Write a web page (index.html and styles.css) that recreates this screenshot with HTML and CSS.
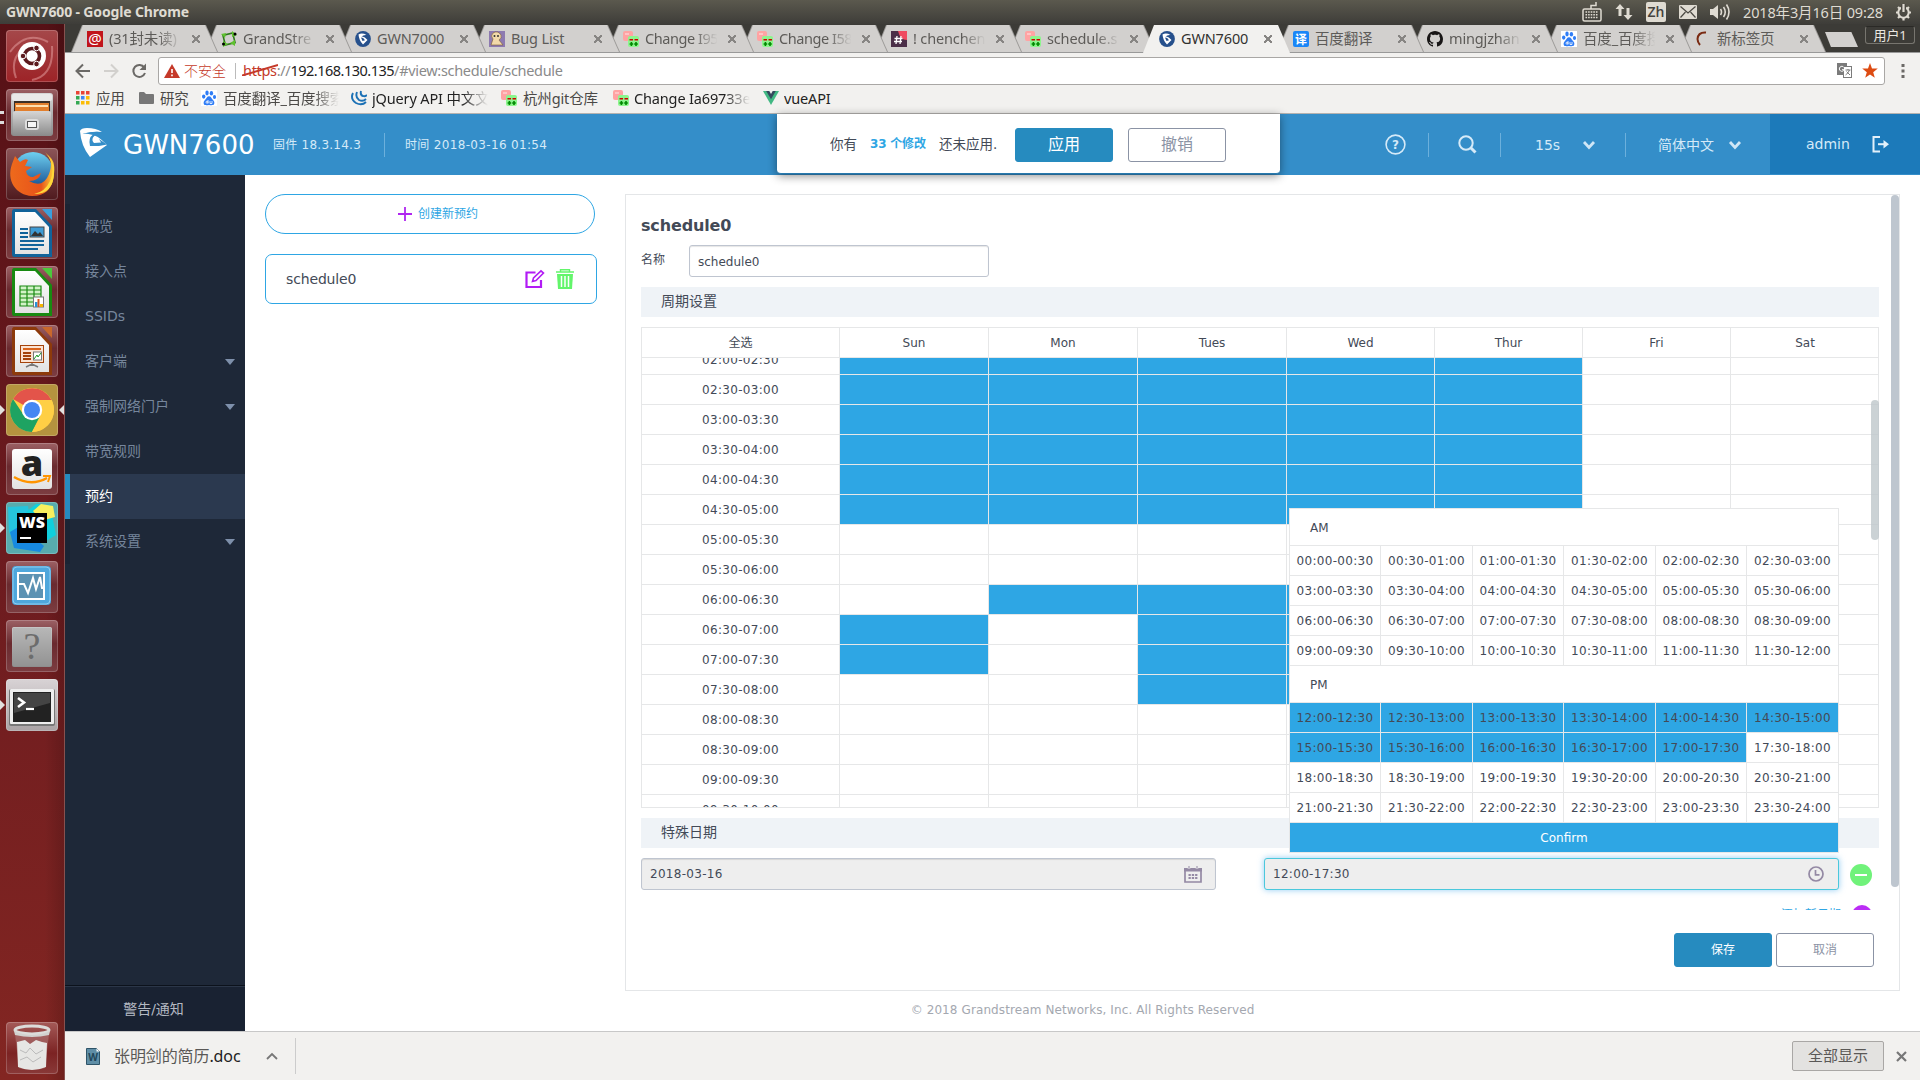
FILE: index.html
```html
<!DOCTYPE html>
<html lang="zh-CN">
<head>
<meta charset="utf-8">
<title>GWN7600</title>
<link rel="stylesheet" href="styles.css">
</head>
<body>
<svg width="0" height="0" class="defs">
  <defs>
    <linearGradient id="paper" x1="0" y1="0" x2="0" y2="1"><stop offset="0" stop-color="#fff"/><stop offset="1" stop-color="#e2e2e2"/></linearGradient>
    <linearGradient id="metal" x1="0" y1="0" x2="0" y2="1"><stop offset="0" stop-color="#d6d6d6"/><stop offset="1" stop-color="#8a8a8a"/></linearGradient>
    <linearGradient id="globe" x1="0" y1="0" x2="0" y2="1"><stop offset="0" stop-color="#6fd0f0"/><stop offset="1" stop-color="#0b3f86"/></linearGradient>
    <linearGradient id="fox" x1="0" y1="0" x2="1" y2="0"><stop offset="0" stop-color="#ee6a1c"/><stop offset=".7" stop-color="#e8531a"/><stop offset="1" stop-color="#ffd83a"/></linearGradient>
    <symbol id="gerrit" viewBox="0 0 16 16"><rect x="0" y="0" width="10" height="10" rx="2" fill="#ffa3a3"/><rect x="2" y="2" width="4" height="2" fill="#ffc4c4"/><rect x="5" y="5" width="11" height="11" rx="2" fill="#8df58d"/><path d="M6.500 8h3.500v1.600h-3.500zM11.500 8h3.500v1.600h-3.500z" fill="#c00"/><path d="M7.600 11h1.600v1.200h1v1.600h-1v1.200h-1.600v-1.200h-1v-1.600h1zM12.200 11h1.600v1.200h1v1.600h-1v1.200h-1.600v-1.200h-1v-1.600h1z" fill="#080"/></symbol>
    <symbol id="gs" viewBox="0 0 16 16"><ellipse cx="8" cy="8" rx="7.900" ry="8" fill="#26508c"/><path d="M3.500 3.500Q7 1.500 11.500 4 8 3.800 6.500 5.500q3-.6 6 3.500L8 13.500Q4 9.500 3.500 3.500z" fill="#fff"/><path d="M6 6.500l1.500 3.500 2.500-.8L8.200 7z" fill="#26508c"/></symbol>
    <symbol id="baidu" viewBox="0 0 16 16"><rect width="16" height="16" fill="#fff"/><g fill="#2f7df6"><ellipse cx="6" cy="3" rx="1.700" ry="2.400"/><ellipse cx="10.400" cy="3.200" rx="1.700" ry="2.300"/><ellipse cx="2.700" cy="6.600" rx="1.700" ry="2.100"/><ellipse cx="13.500" cy="7" rx="1.600" ry="2.100"/><path d="M8 6.200c2 0 2.400 2 4 3.700 2 2 1.700 4.600-.3 5.200-1.500.4-2.500-.2-3.700-.2s-2.200.6-3.700.2c-2-.6-2.300-3.200-.3-5.200 1.600-1.700 2-3.700 4-3.700z"/></g><path d="M5 12.200a1 1 0 1 0 2 0a1 1 0 1 0-2 0M7 10v3.500M9 11v2.500h2v-2.500" fill="none" stroke="#fff" stroke-width=".8"/></symbol>
    <symbol id="chev" viewBox="0 0 14 10"><path d="M2 2l5 5.400 5-5.400" fill="none" stroke="#cfe6f6" stroke-width="2.800"/></symbol>
  </defs>
</svg>

<header class="panel">
  <span class="panel-title">GWN7600 - Google Chrome</span>
  <div class="indicators">
    <svg width="20" height="22" viewBox="0 0 20 22"><path d="M9 8V4.500h5V1" fill="none" stroke="#dfdbd2" stroke-width="1.500"/><rect x="1" y="8" width="18" height="12" rx="1.500" fill="none" stroke="#dfdbd2" stroke-width="1.500"/><path d="M3.500 11h13M3.500 13.700h13M3.500 16.500h13" stroke="#dfdbd2" stroke-width="1.600" stroke-dasharray="1.600 1"/></svg>
    <svg width="18" height="18" viewBox="0 0 18 18"><path d="M5 1l4.500 5H6.500v7h-3V6H.5zM13 17l-4.500-5h3V5h3v7h3z" fill="#dfdbd2"/></svg>
    <span class="ime">Zh</span>
    <svg width="18" height="14" viewBox="0 0 18 14"><rect width="18" height="14" rx="1" fill="#dfdbd2"/><path d="M1.500 1.500L9 8l7.500-6.500M1.500 12.500l5-5.500M16.500 12.500l-5-5.500" fill="none" stroke="#4a4842" stroke-width="1.200"/></svg>
    <svg width="21" height="18" viewBox="0 0 21 18"><path d="M0 6h3l5-4v14l-5-4H0z" fill="#dfdbd2"/><path d="M10.500 6q2 3 0 6M13.500 4q3.500 5 0 10M16.500 1.500q5 7.500 0 15" fill="none" stroke="#dfdbd2" stroke-width="1.600"/></svg>
    <span class="clock">2018年3月16日 09:28</span>
    <svg width="17" height="18" viewBox="0 0 17 18"><circle cx="8.500" cy="9.500" r="5.200" fill="none" stroke="#dfdbd2" stroke-width="2"/><path d="M1 9.500h2M14 9.500h2M3 4l1.800 1.800M14 4l-1.800 1.800M3 15l1.800-1.800M14 15l-1.800-1.800M8.500 15v2.500" stroke="#dfdbd2" stroke-width="2.200"/><path d="M8.500 1v8" stroke="#4a4842" stroke-width="5"/><path d="M8.500 1v8" stroke="#dfdbd2" stroke-width="2.200"/></svg>
  </div>
</header>

<div class="desktop">
<aside class="launcher">
  <div class="tile ubuntu"><svg viewBox="0 0 52 52"><path d="M4 22Q20 0 42 12M10 48Q2 26 24 14M26 50Q48 46 46 16" stroke="#e8a5a5" stroke-width="2" fill="none" opacity=".5"/><circle cx="26" cy="26" r="14" fill="#fff"/><circle cx="26" cy="26" r="7.500" fill="none" stroke="#5c1a1e" stroke-width="3.600"/><g fill="#5c1a1e" stroke="#fff" stroke-width="1"><circle cx="17" cy="26" r="2.800"/><circle cx="30.500" cy="18" r="2.800"/><circle cx="30.500" cy="34" r="2.800"/></g></svg></div>
  <div class="tile run2"><svg viewBox="0 0 52 52"><rect x="5" y="4" width="42" height="43" rx="3" fill="url(#metal)"/><rect x="6" y="5" width="40" height="7" rx="2" fill="#e9e9e9"/><rect x="8" y="12" width="36" height="14" fill="#3b3028"/><rect x="9" y="14" width="34" height="12" fill="#e27f2d"/><path d="M10 17h32" stroke="#ffe0b0" stroke-width="2"/><rect x="7" y="22" width="38" height="25" rx="2" fill="url(#metal)"/><rect x="19" y="30" width="14" height="11" rx="3" fill="#ddd"/><rect x="21.500" y="32.500" width="9" height="6" fill="#f5f5f5" stroke="#555"/></svg></div>
  <div class="tile dark"><svg viewBox="0 0 52 52"><circle cx="27" cy="24" r="20" fill="url(#globe)"/><path d="M6 16l3-8 5 6q5-4 8-2l-3 6 7 1-6 4q1 6 7 6l8-4q-2 8-12 8 14 8 20-7 5-14-3-20 10 5 8 20-2 22-22 22C10 47 0 33 6 16z" fill="url(#fox)"/><path d="M39 4q12 14 5 29-5 11-16 13 20 0 20-22 0-12-9-20z" fill="#ffd83a"/></svg></div>
  <div class="tile"><svg viewBox="0 0 52 52"><path d="M8 2h22l16 17v31H8q-2 0-2-3V5q0-3 2-3z" fill="#11639a"/><path d="M9 5h20l14 15v27H9z" fill="url(#paper)"/><path d="M36 2h10v11z" fill="#3aa0dd"/><path d="M14 22h8M14 26h8M14 30h8M14 34h24M14 38h24M14 42h18" stroke="#11639a" stroke-width="2"/><rect x="24" y="20" width="14" height="10" fill="#3e9bd4" stroke="#444"/><path d="M25 29l4-5 3 3 2-2 3 4z" fill="#333"/></svg></div>
  <div class="tile"><svg viewBox="0 0 52 52"><path d="M8 2h22l16 17v31H8q-2 0-2-3V5q0-3 2-3z" fill="#188a11"/><path d="M9 5h20l14 15v27H9z" fill="url(#paper)"/><path d="M36 2h10v11z" fill="#4cc83c"/><rect x="14" y="20" width="21" height="20" fill="#d2f3c8"/><path d="M14 20h21v20H14zM14 24h21M14 28h21M14 32h21M14 36h21M21 20v20M28 20v20" fill="none" stroke="#188a11" stroke-width="1.200"/><rect x="27.500" y="31" width="10" height="10" fill="#fff" stroke="#777"/><path d="M29 41v-5h2.500v5z" fill="#2a92d8"/><path d="M31.500 41v-8h2v8z" fill="#d9541c"/><path d="M34 41v-3h3v3z" fill="#f3b400"/></svg></div>
  <div class="tile"><svg viewBox="0 0 52 52"><path d="M8 2h22l16 17v31H8q-2 0-2-3V5q0-3 2-3z" fill="#8d3a0b"/><path d="M9 5h20l14 15v27H9z" fill="url(#paper)"/><path d="M36 2h10v11z" fill="#c9682c"/><rect x="14.500" y="20.500" width="23" height="17" fill="#fbe3d2" stroke="#a4430b"/><path d="M17 24h18" stroke="#d9641c" stroke-width="2"/><path d="M17 28h8M17 31h8M17 34h8" stroke="#a4430b" stroke-width="1.800"/><rect x="27.500" y="27" width="8" height="8" fill="#fff" stroke="#777"/><path d="M28 34l3-4 1 2 3-4" stroke="#1a9d22" fill="none"/><path d="M26 38v3M20 42l6-3 6 3" stroke="#777" stroke-width="1.500" fill="none"/></svg></div>
  <div class="tile gold run act"><svg viewBox="0 0 52 52"><circle cx="26" cy="26" r="22" fill="#ffcf45"/><path d="M26 26L7 15A22 22 0 0 1 45.500 16H26z" fill="#e3544a"/><path d="M26 26l-9 4L7 15A22 22 0 0 0 26 48l8-16z" fill="#1ea362"/><path d="M26 48l9.500-17 1-15h9A22 22 0 0 1 26 48z" fill="#ffcf45"/><circle cx="26" cy="26" r="10.200" fill="#fff"/><circle cx="26" cy="26" r="8" fill="#4587f3"/></svg></div>
  <div class="tile"><svg viewBox="0 0 52 52"><rect x="6" y="6" width="40" height="40" rx="3" fill="url(#paper)"/><text x="26" y="33" text-anchor="middle" font-family="Open Sans" font-weight="800" font-size="36" fill="#222">a</text><path d="M8 34q17 10 33 1" fill="none" stroke="#ff9400" stroke-width="2.400"/><path d="M37 33h7l-2 6" fill="none" stroke="#ff9400" stroke-width="2"/></svg></div>
  <div class="tile teal run"><svg viewBox="0 0 52 52"><path d="M2 5l20-1 6 40-16 3L3 30z" fill="#25c4dd"/><path d="M4 30l10-6 24 20-4 6L8 46z" fill="#1789e0"/><path d="M20 10l10-8 14 1 6 30-10 6z" fill="#10cfdd"/><path d="M27 9l8-7 12 2 2 11-14 4z" fill="#f8ef5d"/><rect x="11" y="11" width="30" height="30" fill="#000"/><text x="26" y="26" text-anchor="middle" font-family="Open Sans" font-weight="800" font-size="16" fill="#fff">WS</text><path d="M14 36h11" stroke="#fff" stroke-width="2"/></svg></div>
  <div class="tile"><svg viewBox="0 0 52 52"><rect x="6" y="5" width="39" height="39" rx="4" fill="#4fa7dc"/><rect x="7" y="6" width="37" height="37" rx="4" fill="none" stroke="#8fcdf0"/><rect x="12" y="12" width="26" height="26" fill="#5c92b3" stroke="#fff" stroke-width="2"/><path d="M13 23h5l4 9 5-15 3 11 4-12 2 11h2" fill="none" stroke="#fff" stroke-width="2"/></svg></div>
  <div class="tile"><svg viewBox="0 0 52 52"><rect x="6" y="7" width="40" height="40" rx="2" fill="url(#metal)"/><rect x="6.500" y="7.500" width="39" height="39" rx="2" fill="#999" opacity=".5"/><text x="26" y="39" text-anchor="middle" font-family="Liberation Serif" font-size="38" fill="#6c6c6c">?</text></svg></div>
  <div class="tile silver run"><svg viewBox="0 0 52 52"><rect x="3" y="10" width="46" height="37" rx="2" fill="#777"/><rect x="4" y="10" width="44" height="35" rx="1" fill="#eee"/><rect x="7" y="13" width="38" height="30" fill="#222"/><path d="M8 14h36v10L8 34z" fill="#444"/><path d="M12 19l6 4.500-6 4.500" fill="none" stroke="#fff" stroke-width="2.600"/><path d="M20 30h8" stroke="#fff" stroke-width="2.200"/></svg></div>
  <div class="tile trash"><svg viewBox="0 0 52 52"><path d="M9 12l4 34q13 4 26 0l4-34z" fill="#b98a8a" opacity=".45"/><path d="M11 20l8-2 5 4 6-4 6 2 5 1-1 24q-14 6-28 0z" fill="#e6e6e4"/><path d="M14 28l6 3 4-5 6 6 7-4M14 38l7-3 6 5 8-5" stroke="#bbb" fill="none"/><ellipse cx="26" cy="8" rx="17" ry="4" fill="none" stroke="#dcdcda" stroke-width="3"/><path d="M8 9q18 8 36 0l-1 4q-17 4-34 0z" fill="#d2d2d0"/></svg></div>
</aside>

<div class="browser">
  <div class="tabstrip">
    <div class="tab"><svg class="fav" viewBox="0 0 16 16"><rect width="16" height="16" fill="#c1141b"/><text x="8" y="13" text-anchor="middle" font-family="Noto Sans" font-size="15" fill="#fff">@</text></svg><span class="cap">(31封未读)</span><i class="x"></i></div>
    <div class="tab"><svg class="fav" viewBox="0 0 16 16"><rect x="3" y="3" width="10" height="10" fill="none" stroke="#2f7a1d" stroke-width="1.600" transform="rotate(-14 8 8)"/><path d="M0 3l5-1-1 5zM11 0l5 4-5 2zM14 9l0 6-5-3zM2 10l5 3-5 3z" fill="#5fc12f"/><circle cx="14" cy="3" r="1.500"/><circle cx="2.500" cy="13" r="1.500"/></svg><span class="cap">GrandStre</span><i class="x"></i></div>
    <div class="tab"><svg class="fav"><use href="#gs"/></svg><span class="cap">GWN7000</span><i class="x"></i></div>
    <div class="tab"><svg class="fav" viewBox="0 0 16 16"><rect width="16" height="16" fill="#8d7ab0"/><path d="M2 14L4 8Q1 5 4 2q5-3 8 2 1 3-2 5l4 5z" fill="#f2d9a9" stroke="#7a5b33" stroke-width=".6"/><circle cx="5.500" cy="5" r="1" fill="#333"/><circle cx="9" cy="5" r="1" fill="#333"/></svg><span class="cap">Bug List</span><i class="x"></i></div>
    <div class="tab"><svg class="fav"><use href="#gerrit"/></svg><span class="cap tight">Change I95</span><i class="x"></i></div>
    <div class="tab"><svg class="fav"><use href="#gerrit"/></svg><span class="cap tight">Change I58</span><i class="x"></i></div>
    <div class="tab"><svg class="fav" viewBox="0 0 16 16"><rect width="16" height="16" fill="#4b2f48"/><path d="M7 0h9v9q-7 0-9-9z" fill="#ef4b61"/><path d="M6 5L5 13M10 5L9 13M3.500 7.500h8M3 10.500h8" stroke="#fff" stroke-width="1.300"/></svg><span class="cap">! chenchen</span><i class="x"></i></div>
    <div class="tab"><svg class="fav"><use href="#gerrit"/></svg><span class="cap">schedule.s</span><i class="x"></i></div>
    <div class="tab current"><svg class="fav"><use href="#gs"/></svg><span class="cap">GWN7600</span><i class="x"></i></div>
    <div class="tab"><svg class="fav" viewBox="0 0 16 16"><rect width="16" height="16" rx="2" fill="#1a86f7"/><text x="8" y="12.500" text-anchor="middle" font-family="Noto Sans CJK SC" font-weight="700" font-size="12" fill="#fff">译</text></svg><span class="cap">百度翻译</span><i class="x"></i></div>
    <div class="tab"><svg class="fav" viewBox="0 0 16 16"><path fill="#181616" d="M8 0C3.580 0 0 3.580 0 8c0 3.540 2.290 6.530 5.470 7.590.4.070.55-.17.55-.38 0-.19-.01-.82-.01-1.490-2.010.37-2.530-.49-2.690-.94-.09-.23-.48-.94-.82-1.130-.28-.15-.68-.52-.01-.53.63-.01 1.080.58 1.230.82.72 1.210 1.870.87 2.330.66.070-.52.280-.87.510-1.070-1.780-.2-3.640-.89-3.640-3.950 0-.87.310-1.590.82-2.150-.08-.2-.36-1.020.08-2.120 0 0 .67-.21 2.200.82.640-.18 1.320-.27 2-.27s1.360.09 2 .27c1.530-1.040 2.200-.82 2.200-.82.440 1.100.16 1.920.08 2.120.51.56.82 1.270.82 2.150 0 3.070-1.870 3.750-3.650 3.950.29.25.54.73.54 1.480 0 1.070-.01 1.930-.01 2.200 0 .21.150.46.550.38A8.010 8.010 0 0 0 16 8c0-4.420-3.580-8-8-8z"/></svg><span class="cap">mingjzhan</span><i class="x"></i></div>
    <div class="tab"><svg class="fav"><use href="#baidu"/></svg><span class="cap">百度_百度搜</span><i class="x"></i></div>
    <div class="tab"><svg class="fav" viewBox="0 0 16 16"><path d="M11 1.500Q3 1 2.500 8q0 3 2.500 6" fill="none" stroke="#7a2a12" stroke-width="2"/></svg><span class="cap">新标签页</span><i class="x"></i></div>
    <i class="newtab"></i>
    <span class="user">用户1</span>
  </div>

  <div class="toolbar">
    <svg class="nav" width="80" height="20" viewBox="0 0 80 20"><path d="M16 10H3M9 3.500L2.500 10L9 16.500" fill="none" stroke="#6b6966" stroke-width="2"/><path d="M30 10h13M37 3.500l6.500 6.500-6.500 6.500" fill="none" stroke="#d2d0cd" stroke-width="2"/><path d="M70.300 6.500A6 6 0 1 0 71 12" fill="none" stroke="#6b6966" stroke-width="2"/><path d="M72 2.500v6.500h-6.500z" fill="#6b6966"/></svg>
    <div class="omnibox">
      <svg width="16" height="14" viewBox="0 0 16 14"><path d="M8 0l8 14H0z" fill="#c53929"/><path d="M8 5v4M8 10.500v1.800" stroke="#fff" stroke-width="1.600"/></svg>
      <span class="unsafe">不安全</span><i class="bar"></i>
      <span class="url"><span class="proto">https<svg class="slash" width="36" height="12" viewBox="0 0 36 12"><path d="M0 11.500L36 1" stroke="#c53929" stroke-width="2"/></svg></span>://<b>192.168.130.135</b>/#view:schedule/schedule</span>
      <svg class="translate" width="15" height="15" viewBox="0 0 15 15"><rect width="10" height="12" fill="#7b7b7b"/><rect x="6.500" y="3.500" width="8" height="11" fill="#fff" stroke="#7b7b7b"/><path d="M7 4.500a2.500 2.500 0 1 0 .2 2.200H5" fill="none" stroke="#fff"/><path d="M8.500 7h5M11 6v1M12.500 7q-1 3-4 5M9.500 8.500l3.500 3.500" fill="none" stroke="#7b7b7b"/></svg>
      <svg width="16" height="15" viewBox="0 0 16 15"><path d="M8 0l2 5.400 5.800.2-4.600 3.600 1.600 5.600L8 11.600l-4.800 3.200 1.600-5.600L.2 5.600 6 5.400z" fill="#dd4b12"/></svg>
    </div>
    <svg class="menu" width="4" height="16" viewBox="0 0 4 16"><path d="M.5 1h3v3h-3zM.5 6.500h3v3h-3zM.5 12h3v3h-3z" fill="#6b6966"/></svg>
  </div>

  <div class="bookmarks">
    <span class="bm b1"><svg width="14" height="14" viewBox="0 0 14 14"><path d="M0 0h3.500v3.500H0zM5 0h3.500v3.500H5z" fill="#ea4335"/><path d="M10 0h3.500v3.500H10z" fill="#ea4335"/><path d="M0 5h3.500v3.500H0zM0 10h3.500v3.500H0z" fill="#34a853"/><path d="M5 5h3.500v3.500H5z" fill="#4285f4"/><path d="M10 5h3.500v3.500H10zM5 10h3.500v3.500H5zM10 10h3.500v3.500H10z" fill="#fbbc05"/></svg><em>应用</em></span>
    <span class="bm b2"><svg width="15" height="12" viewBox="0 0 15 12"><path d="M0 1q0-1 1-1h4l2 2h7q1 0 1 1v8q0 1-1 1H1q-1 0-1-1z" fill="#777"/></svg><em>研究</em></span>
    <span class="bm b3"><svg width="16" height="16"><use href="#baidu"/></svg><em class="fade">百度翻译_百度搜索</em></span>
    <span class="bm b4"><svg width="16" height="16" viewBox="0 0 16 16"><path d="M2 3q-3 6 3 10 6 3 10-1M6 2q-2 5 2 8 4 2 7-1M10 1q-1 4 2 5 2 1 4-1" fill="none" stroke="#1c71b5" stroke-width="1.900"/></svg><em class="fade dk">jQuery API 中文文</em></span>
    <span class="bm b5"><svg width="16" height="16"><use href="#gerrit"/></svg><em>杭州git仓库</em></span>
    <span class="bm b6"><svg width="16" height="16"><use href="#gerrit"/></svg><em class="fade dk">Change Ia69733e</em></span>
    <span class="bm b7"><svg width="16" height="14" viewBox="0 0 16 14"><path d="M0 0h16L8 14z" fill="#41b883"/><path d="M3.200 0h9.600L8 8.300z" fill="#35495e"/><path d="M6.300 0h3.400L8 3z" fill="#f2f1ef"/></svg><em class="dk">vueAPI</em></span>
  </div>

  <div class="app">
    <div class="topbar">
      <svg class="logo" width="28" height="29" viewBox="0 0 28 29"><path d="M0 3Q1 0 7 0q9 0 15 4Q12 3 7 6q9-1 20 11L10 29Q1 18 0 3z" fill="#fff"/><path d="M2 6Q12 3 22 4.200 15 6 13 9.500q-1.500 3 1 5.500l7-.5-2-3.500 8 5.500-8 1.500-9 0Q8 10 13 6.500 8 5.500 2 6z" fill="#348ec9"/></svg>
      <h1>GWN7600</h1>
      <span class="fw">固件 18.3.14.3</span><i class="sep s1"></i><span class="tm">时间 2018-03-16 01:54</span>
      <div class="right">
        <svg width="21" height="21" viewBox="0 0 21 21"><circle cx="10.500" cy="10.500" r="9.400" fill="none" stroke="#d5eaf8" stroke-width="1.600"/><text x="10.500" y="15" text-anchor="middle" font-family="DejaVu Sans" font-weight="700" font-size="12" fill="#d5eaf8">?</text></svg>
        <i class="sep s2"></i>
        <svg width="19" height="19" viewBox="0 0 19 19"><circle cx="8" cy="8" r="6.700" fill="none" stroke="#d5eaf8" stroke-width="2"/><path d="M12.500 12.500l5 5" stroke="#d5eaf8" stroke-width="3"/></svg>
        <i class="sep s3"></i><span class="poll">15s</span><svg width="14" height="10" class="c1"><use href="#chev"/></svg>
        <i class="sep s4"></i><span class="lang">简体中文</span><svg width="14" height="10" class="c2"><use href="#chev"/></svg>
        <div class="admin"><span>admin</span><svg width="18" height="17" viewBox="0 0 18 17"><path d="M8 1H1.500v14.500H8" fill="none" stroke="#e2f0fa" stroke-width="2"/><path d="M6 8.200h7" stroke="#e2f0fa" stroke-width="2"/><path d="M11.500 4L17 8.200l-5.500 4.300z" fill="#e2f0fa"/></svg></div>
      </div>
      <div class="pending"><span>你有</span><b>33 个修改</b><span>还未应用.</span><button class="btn primary">应用</button><button class="btn">撤销</button></div>
    </div>

    <div class="body">
      <nav class="side">
        <ul>
          <li>概览</li><li>接入点</li><li>SSIDs</li><li class="sub">客户端</li><li class="sub">强制网络门户</li><li>带宽规则</li><li class="on">预约</li><li class="sub">系统设置</li>
        </ul>
        <div class="alerts">警告/通知</div>
      </nav>

      <section class="list">
        <button class="create"><svg width="14" height="14" viewBox="0 0 14 14"><path d="M7 0v14M0 7h14" stroke="#b026f0" stroke-width="1.800"/></svg>创建新预约</button>
        <div class="card"><span>schedule0</span>
          <svg width="20" height="20" viewBox="0 0 20 20"><path d="M10.500 3.500H1.500v14.500h14.500V11" fill="none" stroke="#b21cf5" stroke-width="2.200"/><path d="M7.500 12.500l1-3.500L16 1.800l2.500 2.300-7.500 7.500z" fill="#fff" stroke="#b21cf5" stroke-width="1.600"/></svg>
          <svg width="18" height="20" viewBox="0 0 18 20"><path d="M0 3h18M4.500 2.500V.8h9v1.700" stroke="#63f56b" stroke-width="1.400" fill="none"/><path d="M1 5h16l-1 15H2z" fill="#63f56b"/><path d="M5.500 7v11M9 7v11M12.500 7v11" stroke="#fff" stroke-width="1.500"/></svg>
        </div>
      </section>

      <main>
        <div class="detail">
          <div class="scroll">
            <h2>schedule0</h2>
            <div class="name"><label>名称</label><div class="field">schedule0</div></div>
            <div class="bar-title">周期设置</div>
            <div class="week">
              <div class="grid head"><span>全选</span><span>Sun</span><span>Mon</span><span>Tues</span><span>Wed</span><span>Thur</span><span>Fri</span><span>Sat</span></div>
              <div class="rows"><div class="grid" id="slots"></div></div>
              <i class="thumb small"></i>
            </div>
            <div class="bar-title">特殊日期</div>
            <div class="special">
              <div class="field ro">2018-03-16<svg width="18" height="17" viewBox="0 0 18 17"><path d="M1 3h16v13H1z" fill="none" stroke="#9489a4" stroke-width="1.700"/><path d="M0 2h18v3.500H0z" fill="#9489a4"/><path d="M5 0v3M13 0v3" stroke="#eee" stroke-width="2.400"/><path d="M5 0v3M13 0v3" stroke="#9489a4"/><path d="M4.500 9h9M4.500 12h9" stroke="#9489a4" stroke-width="2" stroke-dasharray="2.300 1"/></svg></div>
              <div class="field ro focus">12:00-17:30<svg width="16" height="16" viewBox="0 0 16 16"><circle cx="8" cy="8" r="7" fill="none" stroke="#9489a4" stroke-width="1.700"/><path d="M7.500 4v4.800H11.500" fill="none" stroke="#9489a4" stroke-width="1.700"/></svg>
                <div class="picker">
                  <div class="half">AM</div><div class="cells" id="am"></div>
                  <div class="half">PM</div><div class="cells" id="pm"></div>
                  <div class="confirm">Confirm</div>
                </div>
              </div>
              <i class="minus"></i>
            </div>
            <div class="add"><span>添加新日期</span><i></i></div>
          </div>
          <i class="thumb big"></i>
          <div class="actions"><button class="btn primary">保存</button><button class="btn">取消</button></div>
        </div>
        <footer>© 2018 Grandstream Networks, Inc. All Rights Reserved</footer>
      </main>
    </div>
  </div>

  <div class="downloads">
    <svg width="14" height="17" viewBox="0 0 14 17"><path d="M.5.500h10l3 3v13H.5z" fill="#5f8ea6" stroke="#2f5468"/><path d="M10.500.5v3h3z" fill="#fff"/><text x="7" y="12.500" text-anchor="middle" font-family="Noto Sans" font-weight="700" font-size="10" fill="#21465a">W</text></svg>
    <span class="file">张明剑的简历<b>.doc</b></span>
    <svg class="up" width="12" height="8" viewBox="0 0 12 8"><path d="M1 7l5-5 5 5" fill="none" stroke="#777" stroke-width="1.800"/></svg>
    <i class="vr"></i>
    <span class="showall">全部显示</span>
    <svg class="close" width="11" height="11" viewBox="0 0 11 11"><path d="M1 1l9 9M10 1l-9 9" stroke="#777" stroke-width="2.200"/></svg>
  </div>
</div>
</div>
<script src="schedule.js"></script>
</body>
</html>
```
FILE: schedule.js
```js
function clock(n) {
  return String(Math.floor(n / 2)).padStart(2, '0') + ':' + (n % 2 ? '30' : '00');
}
function slot(n) {
  return clock(n) + '-' + clock(n + 1);
}

// Selected half-hour slots per weekday, counted from midnight.
const night = [4, 5, 6, 7, 8, 9];
const week = [
  [...night, 13, 14],
  [...night, 12],
  [...night, 12, 13, 14, 15],
  [...night, 12, 13, 14, 15],
  [...night],
  [],
  []
];

let rows = '';
for (let n = 4; n < 20; n++) {
  rows += '<span>' + slot(n) + '</span>';
  for (const day of week) rows += day.includes(n) ? '<i class="sel"></i>' : '<i></i>';
}
document.getElementById('slots').innerHTML = rows;

function fill(id, from) {
  let out = '';
  for (let n = from; n < from + 24; n++) {
    out += '<span' + (n >= 24 && n <= 34 ? ' class="sel"' : '') + '>' + slot(n) + '</span>';
  }
  document.getElementById(id).innerHTML = out;
}
fill('am', 0);
fill('pm', 24);
```
FILE: styles.css
```css
* { box-sizing: border-box; }
html, body { margin: 0; height: 1080px; overflow: hidden; }
body { width: 1920px; background: #fff; font: 12px/16px "DejaVu Sans", "Noto Sans CJK SC", sans-serif; color: #434a57; }
svg { display: block; flex: none; }
i, em { font-style: normal; }
button { font: inherit; padding: 0; }
.defs { position: absolute; }

/* desktop panel */
.panel { height: 24px; background: linear-gradient(#5b594e, #3e3d39); display: flex; align-items: center; justify-content: space-between; padding: 0 8px 0 6px; color: #dfdbd2; font-family: "Noto Sans", "Noto Sans CJK SC", sans-serif; }
.panel-title { font-size: 14px; font-weight: 700; letter-spacing: -.15px; }
.indicators { display: flex; align-items: center; gap: 13px; }
.ime { width: 20px; height: 20px; background: #dfdbd2; color: #45433e; border-radius: 2px; font: 600 14px/20px "Open Sans", sans-serif; text-align: center; }
.clock { font-size: 14.500px; width: 138px; margin-left: -1px; margin-right: 1px; white-space: nowrap; letter-spacing: -.15px; }

.desktop { display: flex; height: 1056px; }

/* launcher */
.launcher { width: 65px; background: linear-gradient(90deg, transparent 70%, rgba(0,0,0,.15)), linear-gradient(#561116, #6c1b1f 50%, #832622); border-right: 1px solid #87514f; padding: 6px 0 6px 6px; display: flex; flex-direction: column; gap: 7px; }
.tile { width: 52px; height: 52px; border-radius: 4px; position: relative; background: linear-gradient(#9c6165, #6a2a2f 45%, #7c3d41); box-shadow: inset 0 0 0 1px rgba(255,255,255,.2); }
.tile.ubuntu { background: linear-gradient(#a5484a, #9d2327); }
.tile.dark { background: linear-gradient(#8c5558, #4f1a1e); }
.tile.gold { background: #b5933f; }
.tile.teal { background: #58abad; }
.tile.silver { background: linear-gradient(#d8d3d5, #aaa3a5); }
.tile.trash { margin-top: auto; background: linear-gradient(#a45a58, #7c2323 60%, #893938); }
.run::before, .act::after, .run2::before { content: ""; position: absolute; top: 21px; left: -6px; border: 5px solid transparent; border-left-color: #e2e0de; border-right: 0; }
.run2::before { top: 22px; border: 0; width: 4px; height: 7px; border-top: 3px solid #ddd; border-bottom: 3px solid #ddd; }
.act::after { left: auto; right: -6px; border: 5px solid transparent; border-right-color: #e2e0de; border-left: 0; }

/* browser chrome */
.browser { width: 1855px; display: flex; flex-direction: column; font-family: "Noto Sans", "Noto Sans CJK SC", sans-serif; }
.browser > * { flex: none; }
.tabstrip { height: 29px; background: #3c3b37; border-bottom: 1px solid #999; padding: 1px 5px 0 6px; display: flex; position: relative; }
.tab { width: 147px; height: 27px; margin-right: -13px; padding: 0 17px 0 16px; display: flex; align-items: center; flex: none; position: relative; isolation: isolate; color: #5d5b58; }
.tab::before, .tab::after { content: ""; position: absolute; inset: 0; z-index: -1; clip-path: polygon(0 100%, 11px 0, calc(100% - 12px) 0, 100% 100%); background: #9c9a98; }
.tab::after { inset: 0 1px; background: #d2d0ce; }
.tab:nth-child(1) { z-index: 13; } .tab:nth-child(2) { z-index: 12; } .tab:nth-child(3) { z-index: 11; }
.tab:nth-child(4) { z-index: 10; } .tab:nth-child(5) { z-index: 9; } .tab:nth-child(6) { z-index: 8; }
.tab:nth-child(7) { z-index: 7; } .tab:nth-child(8) { z-index: 6; } .tab:nth-child(10) { z-index: 4; }
.tab:nth-child(11) { z-index: 3; } .tab:nth-child(12) { z-index: 2; } .tab:nth-child(13) { z-index: 1; }
.tab.current { z-index: 20; height: 28px; color: #33322f; padding-bottom: 1px; }
.tab.current::before, .tab.current::after { background: #f2f1ef; }
.fav { width: 16px; height: 16px; }
.cap { width: 74px; margin-left: 6px; font-size: 14.500px; line-height: 24px; margin-top: -1px; letter-spacing: -.15px; white-space: nowrap; overflow: hidden; -webkit-mask: linear-gradient(90deg, #000 66%, transparent 98%); mask: linear-gradient(90deg, #000 66%, transparent 98%); }
.cap.tight { letter-spacing: -.45px; }
.tab:nth-child(3) .cap, .current .cap, .tab:nth-child(4) .cap, .tab:nth-child(10) .cap, .tab:nth-child(13) .cap { -webkit-mask: none; mask: none; }
.x { width: 8px; height: 8px; margin: 1px 0 0 9px; background: linear-gradient(45deg, transparent 43%, #878583 43% 57%, transparent 57%), linear-gradient(-45deg, transparent 43%, #878583 43% 57%, transparent 57%); }
.newtab { width: 33px; height: 15px; flex: none; margin: 7px 0 0 12px; background: #d2d0ce; clip-path: polygon(0 0, 80% 0, 100% 100%, 18% 100%); }
.user { width: 50px; height: 18px; flex: none; margin: 1px 0 0 auto; border: 1px solid #77756f; border-top-color: #2a2926; border-radius: 3px; color: #e9e6e0; font-size: 13px; line-height: 17px; text-align: center; letter-spacing: -.2px; }

.toolbar { height: 32px; background: #f2f1ef; display: flex; align-items: center; padding-left: 9px; }
.nav { margin-top: 4px; }
.omnibox { width: 1727px; height: 28px; margin: 3px 0 0 4px; background: #fff; border: 1px solid #a9a7a5; border-radius: 3px; display: flex; align-items: center; padding: 0 6px 0 5px; font-size: 14px; }
.unsafe { color: #c53929; margin-left: 4px; width: 44px; white-space: nowrap; font-weight: 300; }
.bar { width: 1px; height: 16px; background: #bbb; margin: 0 7px; }
.url { flex: 1; color: #8a8a8a; font-size: 14.500px; letter-spacing: -.32px; margin-top: -1px; }
.url b { font-weight: 400; color: #222; letter-spacing: -.5px; }
.proto { color: #c53929; position: relative; }
.slash { position: absolute; left: -1px; top: 4px; }
.translate { margin-right: 10px; }
.menu { margin: 4px 0 0 16px; }

.bookmarks { height: 29px; background: #f2f1ef; border-bottom: 1px solid #b4b2b0; display: flex; align-items: center; padding: 0 0 2px 11px; font-size: 14.500px; color: #4b4947; }
.bm { display: flex; align-items: center; gap: 6px; }
.bm em { white-space: nowrap; overflow: hidden; line-height: 24px; letter-spacing: -.15px; }
.bm .dk { color: #222; margin-left: -1px; }
.b1 { width: 63px; } .b2 { width: 62px; } .b3 { width: 150px; } .b4 { width: 150px; } .b5 { width: 112px; } .b6 { width: 150px; }
.fade { width: 116px; -webkit-mask: linear-gradient(90deg, #000 78%, transparent); mask: linear-gradient(90deg, #000 78%, transparent); }

/* application */
.app { height: 917px; font-family: "DejaVu Sans", "Noto Sans CJK SC", sans-serif; }
.topbar { height: 61px; background: #348ec9; color: #d5eaf8; display: flex; align-items: center; padding-left: 15px; position: relative; }
.logo { margin-top: -5px; }
h1 { font-size: 26px; line-height: 32px; font-weight: 400; color: #fff; margin: 0 0 0 15px; width: 135px; }
.fw { margin-left: 15px; width: 111px; letter-spacing: .25px; }
.tm { margin-left: 20px; letter-spacing: .33px; }
.sep { width: 1px; height: 24px; background: #6cb0dc; }
.right { margin-left: auto; height: 61px; display: flex; align-items: center; }
.s2 { margin: 0 29px 0 22px; }
.s3 { margin: 0 34px 0 23px; }
.poll { width: 47px; font-size: 14px; }
.s4 { margin: 0 32px 0 29px; }
.lang { font-size: 14px; width: 70px; white-space: nowrap; }
.c2 { margin-right: 28px; }
.admin { width: 150px; height: 60px; margin-bottom: 1px; background: #1c7aba; display: flex; align-items: center; gap: 22px; padding-left: 36px; font-size: 14px; color: #d5eaf8; }
.admin span { width: 44px; }
.pending { position: absolute; left: 712px; top: 0; width: 503px; height: 60px; background: #fff; border-radius: 0 0 4px 4px; box-shadow: 0 2px 10px rgba(0,0,0,.45); border-bottom: 1px solid #2879ad; z-index: 5; display: flex; align-items: center; padding-left: 53px; color: #434a57; font-size: 13.500px; white-space: nowrap; }
.pending b { color: #2ea6e4; font-size: 12px; margin: 0 12px 0 13px; width: 57px; letter-spacing: -.2px; }
.pending span { width: 27px; }
.pending span:nth-of-type(2) { width: 64px; }
.btn { width: 98px; height: 34px; border: 1px solid #8b93a5; border-radius: 3px; background: #fff; color: #8b93a5; font-size: 12px; }
.btn.primary { background: #268bbf; border-color: #268bbf; color: #fff; }
.pending .btn { font-size: 16px; margin: 2px 0 0 12px; }
.pending .btn + .btn { margin-left: 15px; }

.body { display: flex; height: 856px; }
.side { width: 180px; background: #1e2838; display: flex; flex-direction: column; justify-content: space-between; color: #76869c; font-size: 14px; }
.side ul { list-style: none; margin: 29px 0 0; padding: 0; }
.side li { height: 45px; line-height: 45px; padding-left: 15px; border-left: 5px solid #1b2434; position: relative; }
.side li.on { background: #2b394f; border-left-color: #268bbf; color: #fff; }
.sub::after { content: ""; position: absolute; right: 10px; top: 20px; border: 5px solid transparent; border-top: 6px solid #7e90ab; border-bottom: 0; }
.alerts { height: 46px; border-top: 1px solid #0c121c; box-shadow: inset 0 1px #2b3648; background: #192232; color: #b4b9c2; line-height: 46px; text-align: center; padding-right: 3px; }

.list { padding: 19px 0 0 20px; width: 380px; }
.create { width: 330px; height: 40px; border: 1px solid #2ea6e4; border-radius: 20px; background: #fff; color: #2ea6e4; display: flex; align-items: center; justify-content: center; gap: 6px; font-size: 12px; padding-left: 16px; }
.card { width: 332px; height: 50px; margin-top: 20px; border: 1px solid #2ea6e4; border-radius: 7px; display: flex; align-items: center; padding: 0 22px 0 20px; gap: 11px; font-size: 14px; letter-spacing: -.15px; }
.card span { flex: 1; }

main { width: 1275px; }
.detail { height: 797px; margin-top: 19px; border: 1px solid #e4e6e8; position: relative; }
.scroll { height: 715px; overflow: hidden; padding: 21px 0 0 15px; }
h2 { margin: 0; font-size: 16px; line-height: 20px; letter-spacing: -.15px; }
.name { display: flex; margin-top: 9px; height: 32px; }
label { width: 48px; line-height: 30px; }
.field { width: 300px; height: 32px; border: 1px solid #bfc5d0; border-radius: 3px; box-shadow: inset 0 1px 1px rgba(0,0,0,.1); padding: 0 8px; line-height: 32px; position: relative; }
.bar-title { width: 1238px; height: 30px; background: #eff3f7; margin-top: 10px; padding-left: 20px; line-height: 28px; font-size: 14px; }
.week { width: 1238px; height: 481px; margin-top: 10px; border: 1px solid #e6e7e8; position: relative; letter-spacing: .3px; }
.grid { display: grid; grid-template-columns: 198px repeat(3, 149px) repeat(4, 148px); text-align: center; }
.grid > * { height: 30px; line-height: 30px; border: 0 solid #e6e7e8; border-width: 0 1px 1px 0; }
.grid > :nth-child(8n) { border-right: 0; }
.sel { background: #2ea6e4; }
.rows { height: 449px; overflow: hidden; }
.rows .grid { margin-top: -13px; }
.head { letter-spacing: 0; }
.thumb { position: absolute; width: 8px; border-radius: 4px; }
.small { right: -1px; top: 72px; height: 140px; background: rgba(190,199,203,.8); }
.big { right: 0; top: 0; height: 692px; background: #bec6cf; }

.special { display: flex; margin-top: 10px; align-items: center; letter-spacing: .3px; }
.ro { width: 575px; background: #eee; display: flex; justify-content: space-between; align-items: center; padding: 0 13px 0 8px; }
.focus { margin-left: 48px; border-color: #4bc8dc; box-shadow: 0 0 6px rgba(75,170,235,.6); padding-right: 14px; }
.minus { width: 22px; height: 22px; border-radius: 50%; margin: 2px 0 0 11px; background: linear-gradient(#fff, #fff) center / 12px 2px no-repeat, #70f27a; }
.add { display: flex; justify-content: flex-end; align-items: flex-start; padding: 15px 27px 0 0; gap: 11px; color: #2ea6e4; margin-left: auto; }
.add span { line-height: 16px; margin-top: 2px; }
.add i { width: 20px; height: 20px; border-radius: 50%; background: #bb2df5; }

.actions { display: flex; gap: 4px; justify-content: flex-end; padding: 23px 25px 0 0; }
footer { margin-top: 12px; text-align: center; color: #a4a8b0; line-height: 14px; padding-right: 360px; letter-spacing: .1px; }

/* time picker */
.picker { position: fixed; left: 1289px; top: 508px; width: 550px; height: 345px; background: #fff; border: 1px solid #e6e7e8; z-index: 10; line-height: 30px; }
.half { height: 37px; line-height: 38px; padding-left: 20px; border-bottom: 1px solid #e6e7e8; letter-spacing: 0; }
.cells { display: grid; grid-template-columns: 91px 92px 91px 92px 91px 91px; text-align: center; }
.cells span { height: 30px; border: 0 solid #e6e7e8; border-width: 0 1px 1px 0; white-space: nowrap; }
.cells span:nth-child(6n) { border-right: 0; }
.confirm { height: 29px; background: #2ea6e4; color: #fff; text-align: center; letter-spacing: 0; }

/* downloads shelf */
.downloads { height: 49px; background: #f2f1ef; border-top: 1px solid #c8c8c8; display: flex; align-items: center; padding: 0 13px 0 21px; color: #5a5856; }
.file { margin-left: 14px; font-size: 16px; width: 152px; white-space: nowrap; letter-spacing: -.1px; }
.file b { font-weight: 400; color: #222; }
.vr { width: 1px; height: 36px; background: #ccc; margin-left: 17px; }
.showall { width: 92px; height: 30px; margin-left: auto; border: 1px solid #a9a7a5; border-radius: 2px; background: #e3e2e0; font-size: 15px; line-height: 27px; text-align: center; }
.close { margin-left: 12px; }
```
